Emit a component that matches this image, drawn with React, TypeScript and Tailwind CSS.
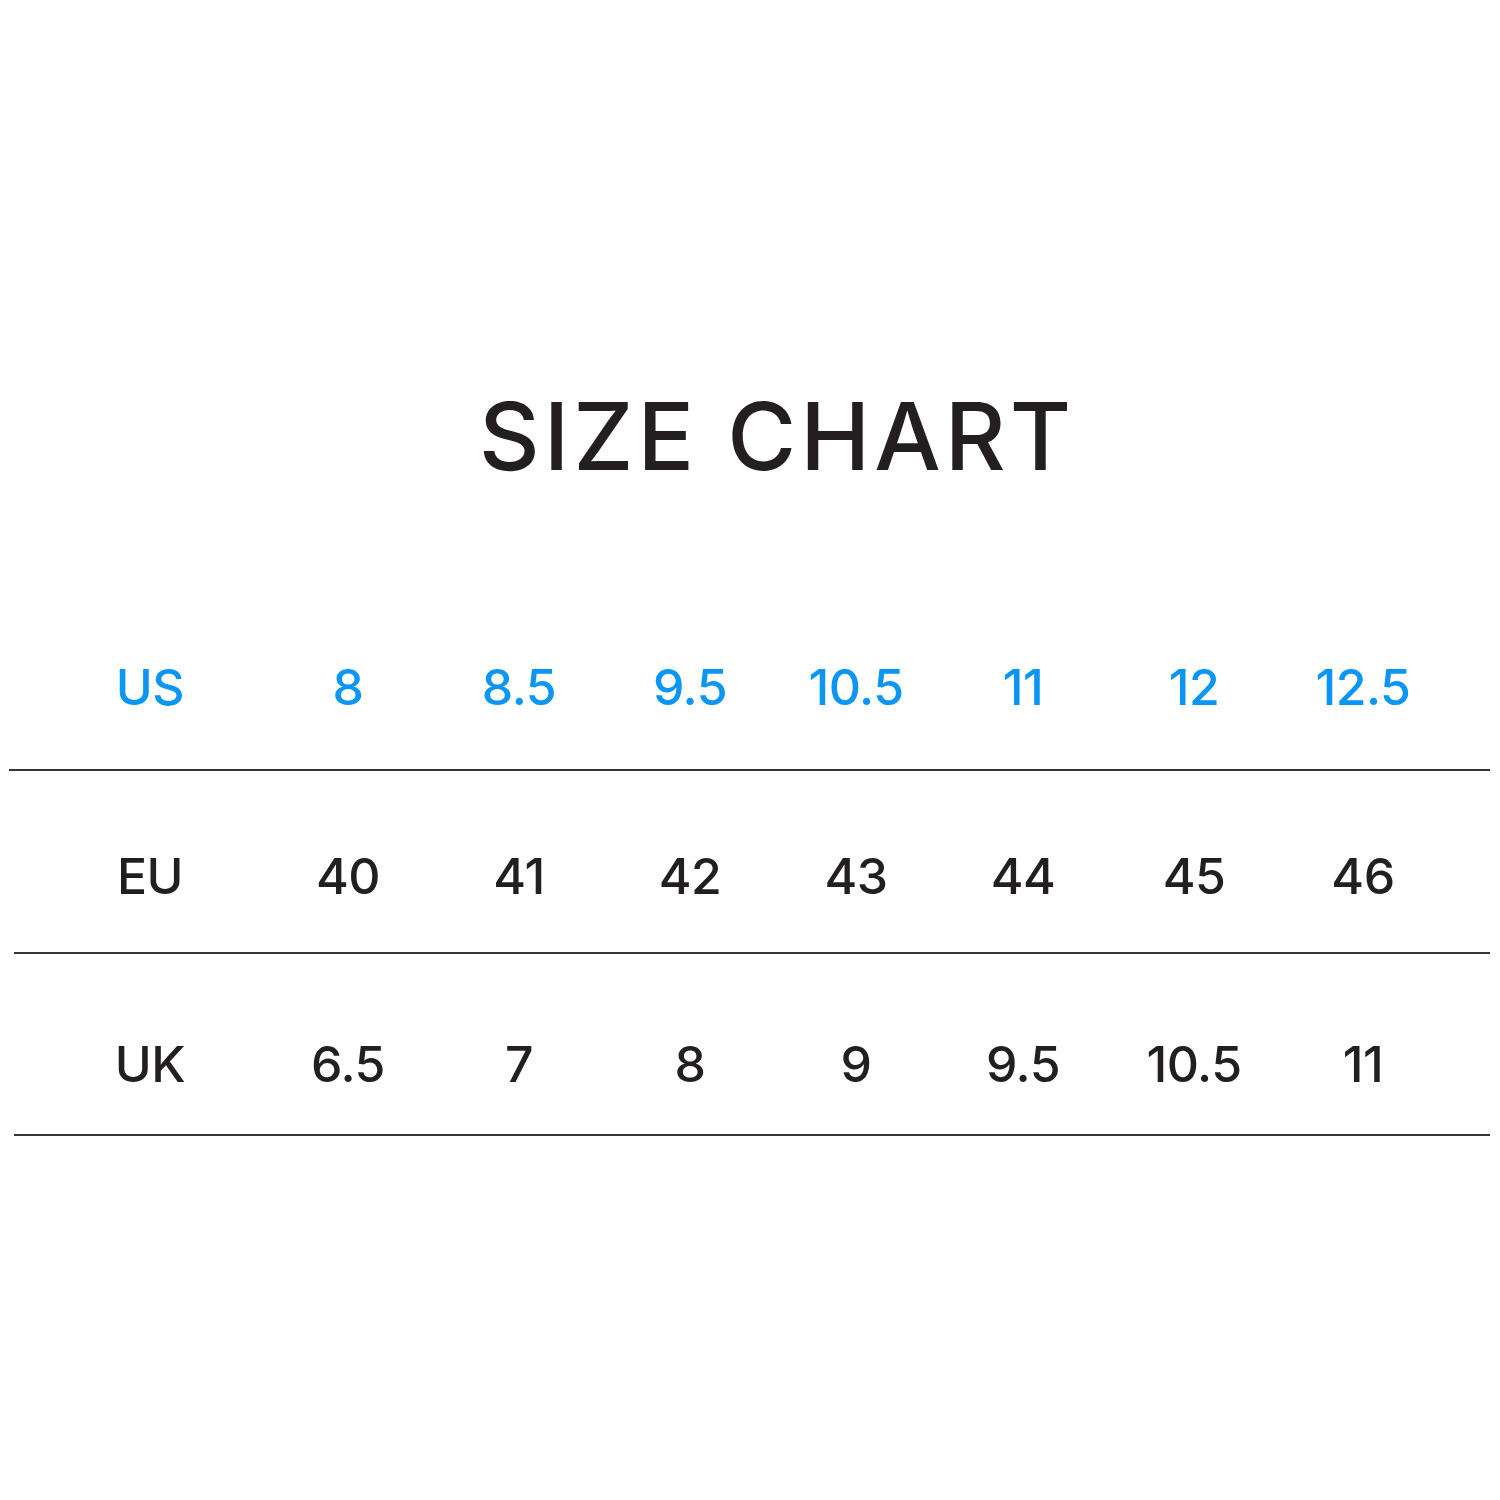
import React from 'react';

const rows = [
  { label: 'US', values: ['8', '8.5', '9.5', '10.5', '11', '12', '12.5'], blue: true },
  { label: 'EU', values: ['40', '41', '42', '43', '44', '45', '46'], blue: false },
  { label: 'UK', values: ['6.5', '7', '8', '9', '9.5', '10.5', '11'], blue: false },
];

const SizeChart: React.FC = () => {
  return (
    <div
      className="w-[1500px] h-[1500px] bg-white overflow-hidden"
      style={{ fontFamily: 'Inter, "Noto Sans", sans-serif' }}
    >
      {/* Title */}
      <div className="pt-[389px] pl-[54px] flex justify-center">
        <h1 className="text-[94px] leading-none font-medium text-[#231f20] tracking-[4px]">
          SIZE CHART
        </h1>
      </div>

      {/* Rows */}
      <div className="mt-[179px]">
        {/* US */}
        <div className="ml-[37px] grid grid-cols-[226px_170px_172px_170px_162px_172px_170px_168px] h-[50px] text-[50px] leading-none font-medium tracking-[-0.5px] text-[#0b96f5]">
          <span className="text-center">{rows[0].label}</span>
          {rows[0].values.map((v) => (
            <span key={v} className="text-center">{v}</span>
          ))}
        </div>
        <div className="mt-[57px] ml-[9px] w-[1481px] h-[2px] bg-[#353535]" />

        {/* EU */}
        <div className="mt-[80px] ml-[37px] grid grid-cols-[226px_170px_172px_170px_162px_172px_170px_168px] h-[50px] text-[50px] leading-none font-medium tracking-[-0.5px] text-[#231f20]">
          <span className="text-center">{rows[1].label}</span>
          {rows[1].values.map((v) => (
            <span key={v} className="text-center">{v}</span>
          ))}
        </div>
        <div className="mt-[51px] ml-[14px] w-[1476px] h-[2px] bg-[#353535]" />

        {/* UK */}
        <div className="mt-[85px] ml-[37px] grid grid-cols-[226px_170px_172px_170px_162px_172px_170px_168px] h-[50px] text-[50px] leading-none font-medium tracking-[-0.5px] text-[#231f20]">
          <span className="text-center">{rows[2].label}</span>
          {rows[2].values.map((v, i) => (
            <span key={i} className="text-center">{v}</span>
          ))}
        </div>
        <div className="mt-[45px] ml-[14px] w-[1476px] h-[2px] bg-[#353535]" />
      </div>
    </div>
  );
};

export default function App() {
  return <SizeChart />;
}
